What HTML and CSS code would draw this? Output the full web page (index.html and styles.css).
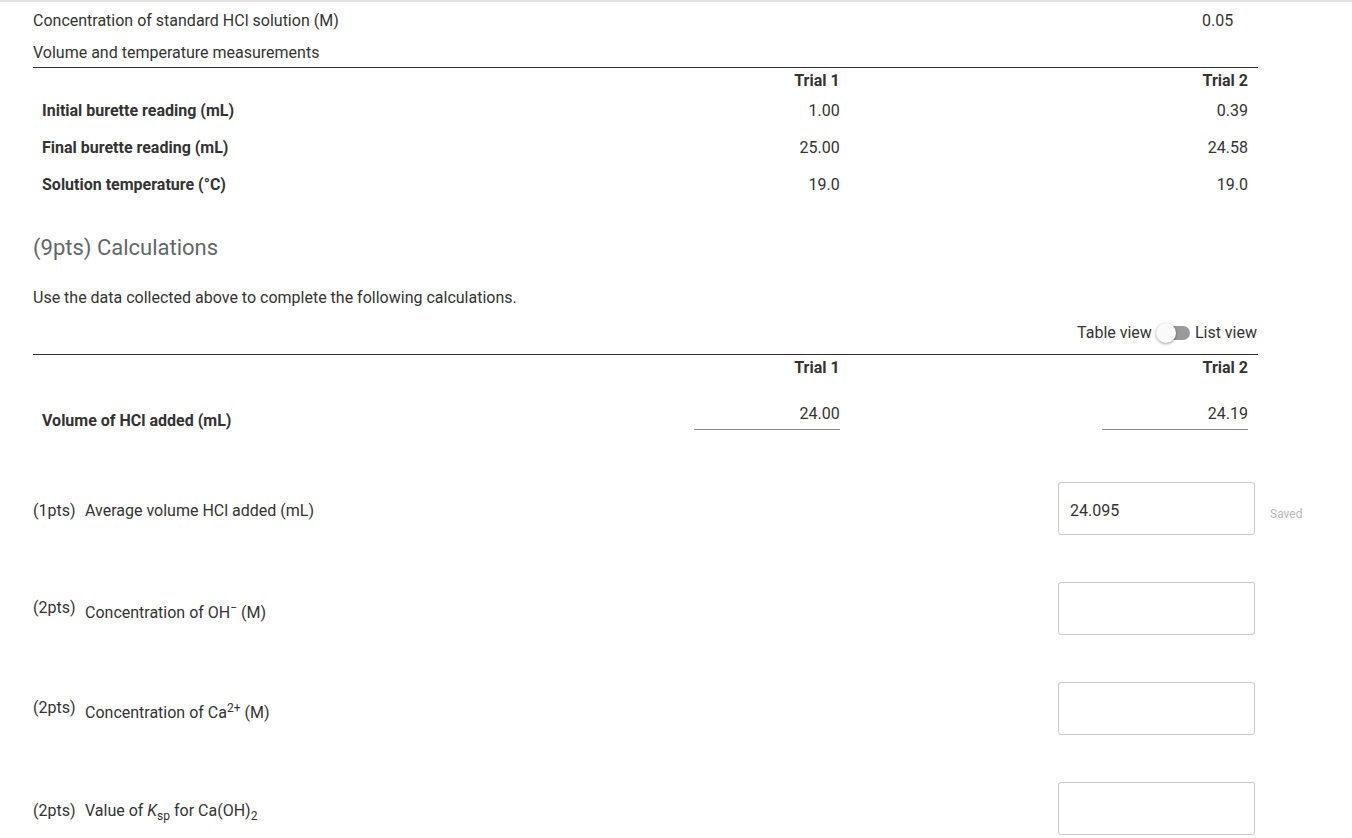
FILE: index.html
```html
<!DOCTYPE html>
<html>
<head>
<meta charset="utf-8">
<link rel="stylesheet" href="styles.css">
</head>
<body>
<div class="topbar"></div>
<div class="page">
  <div class="kv">
    <div class="kv-label">Concentration of standard HCl solution (M)</div>
    <div class="kv-value">0.05</div>
  </div>
  <div class="caption">Volume and temperature measurements</div>
  <table class="data">
    <thead>
      <tr><th></th><th>Trial 1</th><th>Trial 2</th></tr>
    </thead>
    <tbody>
      <tr><td class="lbl">Initial burette reading (mL)</td><td>1.00</td><td>0.39</td></tr>
      <tr><td class="lbl">Final burette reading (mL)</td><td>25.00</td><td>24.58</td></tr>
      <tr><td class="lbl">Solution temperature (°C)</td><td>19.0</td><td>19.0</td></tr>
    </tbody>
  </table>

  <h2 class="section">(9pts) Calculations</h2>
  <p class="intro">Use the data collected above to complete the following calculations.</p>

  <div class="toggle-row">
    <span>Table view</span>
    <span class="switch"><span class="track"></span><span class="knob"></span></span>
    <span>List view</span>
  </div>

  <table class="data calc">
    <thead>
      <tr><th></th><th>Trial 1</th><th>Trial 2</th></tr>
    </thead>
    <tbody>
      <tr>
        <td class="lbl">Volume of HCl added (mL)</td>
        <td><div class="line-input">24.00</div></td>
        <td><div class="line-input">24.19</div></td>
      </tr>
    </tbody>
  </table>

  <div class="questions">
    <div class="q">
      <div class="q-text"><span class="pts">(1pts)</span><span class="q-label">Average volume HCl added (mL)</span></div>
      <div class="box-wrap"><div class="box">24.095</div><span class="saved">Saved</span></div>
    </div>
    <div class="q">
      <div class="q-text"><span class="pts">(2pts)</span><span class="q-label">Concentration of OH<sup>−</sup> (M)</span></div>
      <div class="box-wrap"><div class="box"></div></div>
    </div>
    <div class="q">
      <div class="q-text"><span class="pts">(2pts)</span><span class="q-label">Concentration of Ca<sup>2+</sup> (M)</span></div>
      <div class="box-wrap"><div class="box"></div></div>
    </div>
    <div class="q">
      <div class="q-text"><span class="pts">(2pts)</span><span class="q-label">Value of <i>K</i><sub>sp</sub> for Ca(OH)<sub>2</sub></span></div>
      <div class="box-wrap"><div class="box"></div></div>
    </div>
  </div>
</div>
</body>
</html>
```
FILE: styles.css
```css
html, body {
  margin: 0;
  padding: 0;
  background: #fff;
}
body {
  font-family: Roboto, "Liberation Sans", Arial, sans-serif;
  font-size: 16px;
  color: #333;
  overflow: hidden;
  height: 838px;
}
.topbar {
  height: 2px;
  background: #e2e2e2;
}
.page {
  width: 1225px;
  margin-left: 33px;
}
.kv {
  display: grid;
  grid-template-columns: 1169px auto;
  line-height: 20px;
  margin-top: 9px;
}
.caption {
  line-height: 20px;
  margin-top: 12px;
  padding-bottom: 4px;
  border-bottom: 1px solid #333;
}
.data {
  width: 1225px;
  border-collapse: collapse;
  table-layout: fixed;
}
.data th, .data td {
  text-align: right;
  padding: 0 10px;
  line-height: 20px;
}
.data th {
  font-weight: 700;
  height: 21px;
  padding-top: 3px;
  vertical-align: top;
}
.data td {
  height: 37px;
  vertical-align: middle;
}
.data td.lbl {
  text-align: left;
  font-weight: 700;
  padding-left: 9px;
}
.section {
  font-size: 22px;
  font-weight: 400;
  color: #5f6868;
  line-height: 28px;
  margin: 31px 0 0 0;
}
.intro {
  margin: 26px 0 0 0;
  line-height: 20px;
}
.toggle-row {
  display: flex;
  justify-content: flex-end;
  align-items: center;
  gap: 4px;
  line-height: 20px;
  margin-top: 15px;
  padding-right: 1px;
  padding-bottom: 11px;
  border-bottom: 1px solid #333;
}
.switch {
  position: relative;
  width: 35px;
  height: 20px;
  display: inline-block;
}
.track {
  position: absolute;
  left: 6px;
  top: 3px;
  width: 28px;
  height: 14px;
  border-radius: 7px;
  background: #9a9a9a;
}
.knob {
  position: absolute;
  left: 0;
  top: 0;
  width: 20px;
  height: 20px;
  border-radius: 50%;
  background: #fafafa;
  box-shadow: 0 1px 3px rgba(0,0,0,0.4);
}
.calc th {
  height: 20px;
  padding-top: 3px;
}
.calc td {
  height: auto;
  vertical-align: top;
  padding-top: 22px;
  padding-bottom: 10px;
}
.calc td.lbl {
  padding-top: 33px;
}
.line-input {
  width: 146px;
  margin-left: auto;
  height: 30px;
  box-sizing: border-box;
  border-bottom: 1px solid #8a8a8a;
  text-align: right;
  line-height: 28px;
}
.questions {
  margin-top: 41px;
}
.q {
  display: flex;
  align-items: center;
  height: 53px;
  margin-bottom: 47px;
}
.q-text {
  flex: 1;
  display: flex;
  align-items: flex-start;
  line-height: 20px;
  padding-top: 4px;
}
.pts {
  width: 52px;
}
.q-label sup {
  font-size: 12px;
}
.q-label sub {
  font-size: 12px;
  line-height: 0;
  vertical-align: -4px;
}
.box-wrap {
  position: relative;
  margin-right: 3px;
}
.box {
  width: 197px;
  height: 53px;
  box-sizing: border-box;
  border: 1px solid #c8c8c8;
  border-radius: 3px;
  padding: 3px 11px 0;
  line-height: 49px;
}
.saved {
  position: absolute;
  left: 212px;
  top: 25px;
  font-size: 12px;
  color: #b5b5b5;
  white-space: nowrap;
}
```
